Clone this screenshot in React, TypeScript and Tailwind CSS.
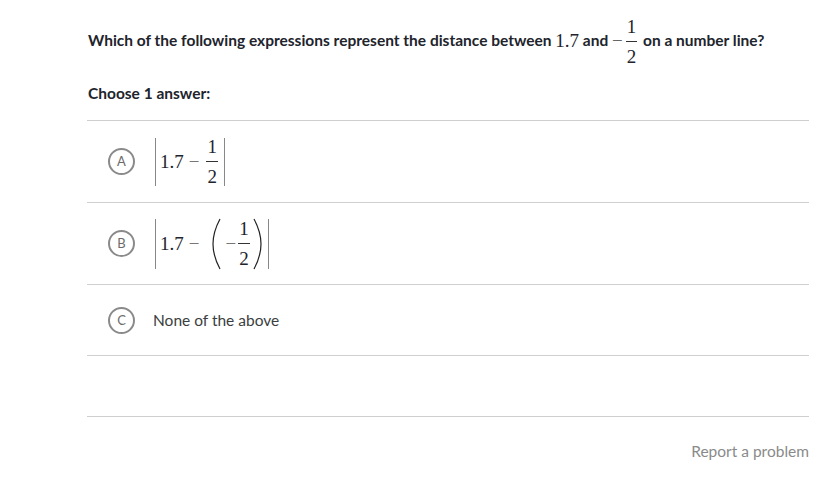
import React from "react";

const mathFont = { fontFamily: '"Liberation Serif", "DejaVu Serif", serif' };

function Frac({ num, den }: { num: string; den: string }) {
    return (
        <span className="inline-flex flex-col items-center align-middle mx-[2px] leading-none">
            <span className="pb-[5px] px-[1px]">{num}</span>
            <span className="w-full border-t border-[#333]" />
            <span className="pt-[5px] px-[1px]">{den}</span>
        </span>
    );
}

function Paren({ right }: { right?: boolean }) {
    return (
        <svg width="10" height="52" viewBox="0 0 10 52" className="shrink-0">
            <path
                d={right ? "M2 1 Q9 14 9 26 Q9 38 2 51" : "M8 1 Q1 14 1 26 Q1 38 8 51"}
                fill="none"
                stroke="#222"
                strokeWidth="1.2"
            />
        </svg>
    );
}

function Bubble({ letter }: { letter: string }) {
    return (
        <div className="w-[27px] h-[27px] rounded-full border-2 border-[#8a8a8a] flex items-center justify-center text-[13px] text-[#6b6b6b] shrink-0">
            {letter}
        </div>
    );
}

export default function App() {
    return (
        <div className="w-[831px] h-[488px] bg-white text-[#21242c] flex flex-col" style={{ fontFamily: "Lato, 'Noto Sans', sans-serif" }}>
            <div className="pl-[88px] pr-[22px] pt-[15px]">
                <p className="text-[15.5px] font-bold flex items-center h-[52px]">
                    <span>Which of the following expressions represent the distance between&nbsp;</span>
                    <span className="text-[19px] font-normal" style={mathFont}>1.7</span>
                    <span>&nbsp;and&nbsp;</span>
                    <span className="text-[19px] font-normal inline-flex items-center" style={mathFont}>
                        <span className="text-[#666] mr-[1px]">−</span>
                        <Frac num="1" den="2" />
                    </span>
                    <span>&nbsp;on a number line?</span>
                </p>

                <p className="text-[15.5px] font-bold mt-[15px]">Choose 1 answer:</p>
            </div>

            <div className="ml-[87px] mr-[22px] mt-[15px]">
                {/* A */}
                <div className="h-[82px] border-t border-[#cfcfcf] flex items-center pl-[21px] gap-[20px]">
                    <Bubble letter="A" />
                    <span className="flex items-center text-[19px]" style={mathFont}>
                        <span className="border-l border-[#888] h-[48px] mr-[4px]" />
                        <span>1.7</span>
                        <span className="text-[#777] mx-[5px]">−</span>
                        <Frac num="1" den="2" />
                        <span className="border-l border-[#888] h-[48px] ml-[4px]" />
                    </span>
                </div>
                {/* B */}
                <div className="h-[82px] border-t border-[#cfcfcf] flex items-center pl-[21px] gap-[20px]">
                    <Bubble letter="B" />
                    <span className="flex items-center text-[19px]" style={mathFont}>
                        <span className="border-l border-[#888] h-[50px] mr-[4px]" />
                        <span>1.7</span>
                        <span className="text-[#777] mx-[5px]">−</span>
                        <span className="ml-[8px]"><Paren /></span>
                        <span className="text-[#777] ml-[3px]">−</span>
                        <Frac num="1" den="2" />
                        <Paren right />
                        <span className="border-l border-[#888] h-[50px] ml-[6px]" />
                    </span>
                </div>
                {/* C */}
                <div className="h-[71px] border-t border-[#cfcfcf] flex items-center pl-[21px] gap-[18px]">
                    <Bubble letter="C" />
                    <span className="text-[15.5px] text-[#3b3e40]">None of the above</span>
                </div>
                <div className="h-[61px] border-t border-[#cfcfcf]" />
                <div className="border-t border-[#cfcfcf] flex justify-end pt-[23px]">
                    <span className="text-[15.5px] text-[#8a8a8a]">Report a problem</span>
                </div>
            </div>
        </div>
    );
}
